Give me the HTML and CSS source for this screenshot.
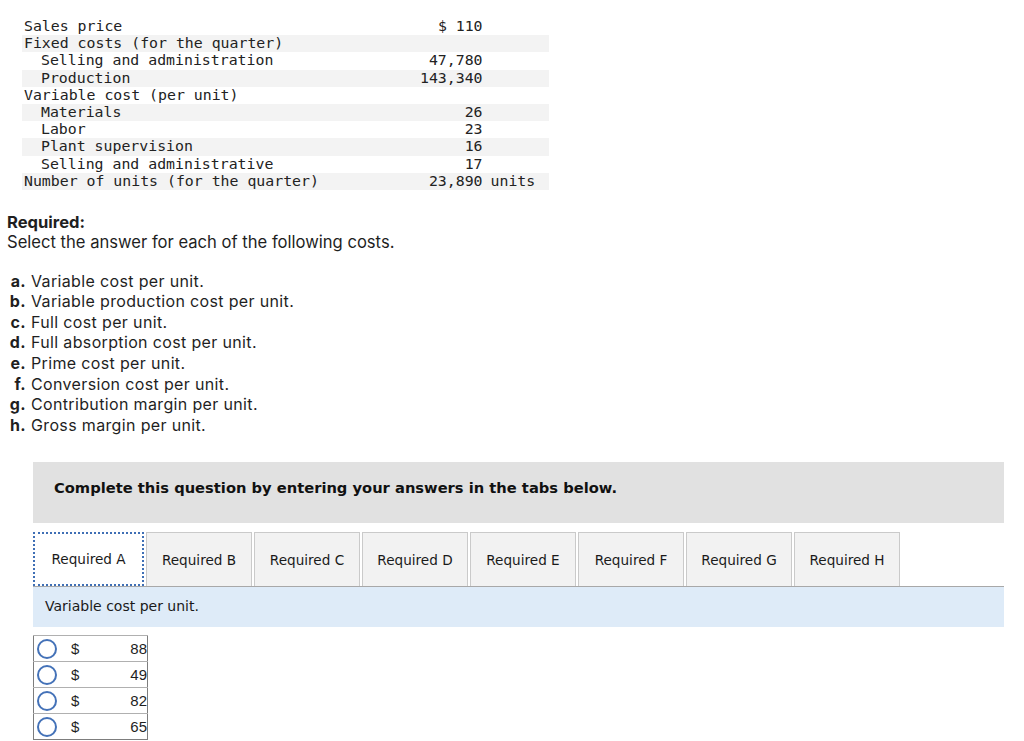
FILE: index.html
```html
<!DOCTYPE html>
<html lang="en">
<head>
  <meta charset="UTF-8">
  <meta name="viewport" content="width=device-width, initial-scale=1.0">
  <title>Cost per unit</title>
  <link rel="stylesheet" href="styles.css">
</head>
<body>
  <table class="data">
    <tr><td class="label">Sales price</td><td class="num">$ 110</td><td class="unit"></td></tr>
    <tr class="shade"><td class="label">Fixed costs (for the quarter)</td><td class="num"></td><td class="unit"></td></tr>
    <tr><td class="label sub">Selling and administration</td><td class="num">47,780</td><td class="unit"></td></tr>
    <tr class="shade"><td class="label sub">Production</td><td class="num">143,340</td><td class="unit"></td></tr>
    <tr><td class="label">Variable cost (per unit)</td><td class="num"></td><td class="unit"></td></tr>
    <tr class="shade"><td class="label sub">Materials</td><td class="num">26</td><td class="unit"></td></tr>
    <tr><td class="label sub">Labor</td><td class="num">23</td><td class="unit"></td></tr>
    <tr class="shade"><td class="label sub">Plant supervision</td><td class="num">16</td><td class="unit"></td></tr>
    <tr><td class="label sub">Selling and administrative</td><td class="num">17</td><td class="unit"></td></tr>
    <tr class="shade"><td class="label">Number of units (for the quarter)</td><td class="num">23,890</td><td class="unit">units</td></tr>
  </table>

  <div class="required">
    <strong>Required:</strong>
    <p>Select the answer for each of the following costs.</p>
  </div>

  <ol class="parts">
    <li><b>a.</b><span>Variable cost per unit.</span></li>
    <li><b>b.</b><span>Variable production cost per unit.</span></li>
    <li><b>c.</b><span>Full cost per unit.</span></li>
    <li><b>d.</b><span>Full absorption cost per unit.</span></li>
    <li><b>e.</b><span>Prime cost per unit.</span></li>
    <li><b>f.</b><span>Conversion cost per unit.</span></li>
    <li><b>g.</b><span>Contribution margin per unit.</span></li>
    <li><b>h.</b><span>Gross margin per unit.</span></li>
  </ol>

  <div class="notice">Complete this question by entering your answers in the tabs below.</div>

  <div class="tabs">
    <button class="tab active">Required A</button>
    <button class="tab">Required B</button>
    <button class="tab">Required C</button>
    <button class="tab">Required D</button>
    <button class="tab">Required E</button>
    <button class="tab">Required F</button>
    <button class="tab">Required G</button>
    <button class="tab">Required H</button>
  </div>
  <div class="panel">Variable cost per unit.</div>

  <table class="choices">
    <tr><td class="radio"><span class="circle"></span></td><td class="dollar">$</td><td class="amount">88</td></tr>
    <tr><td class="radio"><span class="circle"></span></td><td class="dollar">$</td><td class="amount">49</td></tr>
    <tr><td class="radio"><span class="circle"></span></td><td class="dollar">$</td><td class="amount">82</td></tr>
    <tr><td class="radio"><span class="circle"></span></td><td class="dollar">$</td><td class="amount">65</td></tr>
  </table>
</body>
</html>
```

FILE: styles.css
```css
body {
  margin: 0;
  padding: 18px 0 0 7px;
  font-family: "Liberation Sans", Arial, sans-serif;
  color: #1f1f1f;
  background: white;
}

/* data table */
.data {
  margin-left: 15px;
  border-collapse: collapse;
  font-family: "DejaVu Sans Mono", monospace;
  font-size: 14.85px;
  color: #222;
}
.data td {
  height: 17.2px;
  padding: 0;
  line-height: 17px;
  white-space: pre;
}
.data .label {
  width: 379px;
  padding-left: 2px;
}
.data .sub {
  padding-left: 19px;
}
.data .num {
  width: 62px;
  text-align: right;
}
.data .unit {
  width: 58px;
  padding-left: 8px;
}
.data .shade td {
  background-color: #f3f3f3;
}

/* question */
.required {
  margin-top: 22px;
  font-family: Inter, "Liberation Sans", sans-serif;
  font-size: 16.6px;
  line-height: 20.4px;
}
.required p {
  margin: 0;
}
.parts {
  list-style: none;
  margin: 18px 0 0;
  padding: 0;
  font-family: Inter, "Liberation Sans", sans-serif;
  font-size: 16px;
  line-height: 20.6px;
  letter-spacing: 0.35px;
}
.parts li {
  display: flex;
}
.parts b {
  width: 19px;
  text-align: right;
  margin-right: 5px;
}

/* answer area */
.notice {
  margin: 27px 20px 0 26px;
  height: 61px;
  box-sizing: border-box;
  padding: 17px 21px 0;
  background-color: #e1e1e1;
  font-family: "DejaVu Sans", Verdana, sans-serif;
  font-weight: bold;
  font-size: 14.7px;
  color: #111;
}
.tabs {
  display: flex;
  gap: 2px;
  margin: 9px 20px 0 26px;
  border-bottom: 1px solid #a8a8a8;
}
.tab {
  width: 106px;
  height: 54px;
  padding: 0;
  background-color: #f2f2f2;
  border: 1px solid #cacaca;
  border-bottom: none;
  font-family: "DejaVu Sans", Verdana, sans-serif;
  font-size: 13.6px;
  color: #1a1a1a;
  cursor: pointer;
}
.tab.active {
  width: 111px;
  background-color: white;
  border: 2px dotted #3f6fb5;
}
.panel {
  margin: 0 20px 0 26px;
  height: 40px;
  box-sizing: border-box;
  padding: 11px 12px 0;
  background-color: #deebf8;
  font-family: "DejaVu Sans", Verdana, sans-serif;
  font-size: 14px;
  color: #1a1a1a;
}

.choices {
  margin: 8px 0 0 26px;
  border-collapse: collapse;
  border: 1px solid #7d7d7d;
  font-size: 15px;
}
.choices td {
  height: 25px;
  padding: 0;
  border-top: 1px solid #b0b0b0;
}
.choices .radio {
  width: 28px;
  padding-left: 3px;
}
.circle {
  display: block;
  width: 16px;
  height: 16px;
  border: 2.5px solid #4472b8;
  border-radius: 50%;
}
.choices .dollar {
  width: 40px;
  padding-left: 6px;
}
.choices .amount {
  width: 36px;
  text-align: right;
}
```
